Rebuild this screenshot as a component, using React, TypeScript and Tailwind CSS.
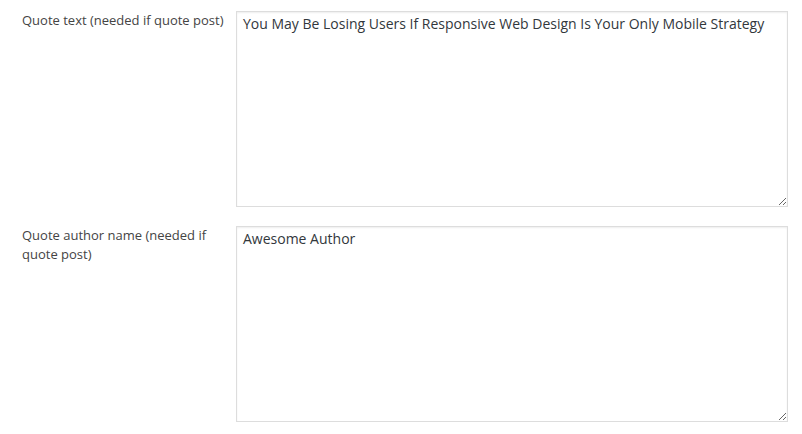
import React from 'react';

const fields = [
  {
    label: 'Quote text (needed if quote post)',
    value: 'You May Be Losing Users If Responsive Web Design Is Your Only Mobile Strategy',
  },
  {
    label: 'Quote author name (needed if quote post)',
    value: 'Awesome Author',
  },
];

const App = () => {
  return (
    <div className="min-h-screen bg-white pt-[11px] pl-[22px] font-['Open_Sans',sans-serif]">
      <div className="flex flex-col gap-[19px]">
        {fields.map((field, index) => (
          <div key={index} className="flex">
            <label className="w-[214px] shrink-0 pr-[12px] text-[13px] leading-[19px] text-[#444]">
              {field.label}
            </label>
            <textarea
              defaultValue={field.value}
              className="block h-[196px] w-[552px] border border-[#ddd] bg-white px-[6px] py-[2px] text-[14px] leading-[1.4] text-[#32373c] shadow-[inset_0_1px_2px_rgba(0,0,0,0.07)] outline-none"
            />
          </div>
        ))}
      </div>
    </div>
  );
};

export default App;
